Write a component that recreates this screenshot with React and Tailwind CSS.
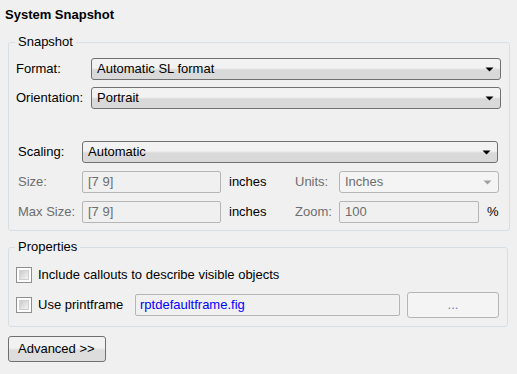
const Arrow = ({ disabled }) => (
  <svg width="9" height="5" viewBox="0 0 9 5" className="shrink-0">
    <path d="M0.5 0.5h8L4.5 4.5z" fill={disabled ? '#a0a0a0' : '#000'} />
  </svg>
);

const Dropdown = ({ value, className = '' }) => (
  <div
    className={`flex h-[22px] items-center justify-between rounded-[3px] border border-[#707070] bg-gradient-to-b from-[#f2f2f2] from-45% to-[#d9d9d9] to-55% pl-[5px] pr-[6px] ${className}`}
  >
    <span>{value}</span>
    <Arrow />
  </div>
);

const DisabledDropdown = ({ value, className = '' }) => (
  <div
    className={`flex h-[22px] items-center justify-between rounded-[3px] border border-[#b5b5b5] bg-[#f4f4f4] pl-[5px] pr-[6px] text-[#6d6d6d] ${className}`}
  >
    <span>{value}</span>
    <Arrow disabled />
  </div>
);

const Field = ({ value, className = '' }) => (
  <div
    className={`flex h-[22px] items-center rounded-[2px] border border-[#b5b5b5] bg-[#f0f0f0] pl-[5px] text-[#6d6d6d] ${className}`}
  >
    {value}
  </div>
);

const Checkbox = () => (
  <div className="h-[16px] w-[16px] shrink-0 border border-[#8e8f8f] bg-white p-[2px]">
    <div className="h-full w-full border border-[#d0d0d0] bg-gradient-to-br from-[#cbcbcb] to-[#f4f4f4]" />
  </div>
);

export default function App() {
  return (
    <div className="h-[374px] w-[517px] bg-[#f0f0f0] text-[13px] leading-[16px] text-black [font-family:'Liberation_Sans',Arial,sans-serif]">
      <div className="pl-[5px] pt-[7px] font-bold">System Snapshot</div>

      {/* Snapshot group */}
      <fieldset className="mx-[8px] mt-[11px] w-[500px] rounded-[3px] border border-[#d5dfe5]">
        <legend className="ml-[6px] px-[3px]">Snapshot</legend>

        <div className="grid grid-cols-[75px_1fr] items-center gap-y-[7px] pl-[7px] pr-[8px] pt-[8px]">
          <span>Format:</span>
          <Dropdown value="Automatic SL format" />
          <span>Orientation:</span>
          <Dropdown value="Portrait" />
        </div>

        <div className="flex flex-col gap-[8px] pb-[7px] pl-[9px] pr-[10px] pt-[32px]">
          <div className="flex items-center pr-[1px]">
            <span className="w-[64px]">Scaling:</span>
            <Dropdown value="Automatic" className="flex-1" />
          </div>

          <div className="flex items-center">
            <span className="w-[64px] text-[#6d6d6d]">Size:</span>
            <Field value="[7 9]" className="w-[139px]" />
            <span className="ml-[8px] w-[66px]">inches</span>
            <span className="w-[44px] text-[#6d6d6d]">Units:</span>
            <DisabledDropdown value="Inches" className="flex-1" />
          </div>

          <div className="flex items-center">
            <span className="w-[64px] text-[#6d6d6d]">Max Size:</span>
            <Field value="[7 9]" className="w-[139px]" />
            <span className="ml-[8px] w-[66px]">inches</span>
            <span className="w-[44px] text-[#6d6d6d]">Zoom:</span>
            <Field value="100" className="w-[140px]" />
            <span className="ml-[8px]">%</span>
          </div>
        </div>
      </fieldset>

      {/* Properties group */}
      <fieldset className="mx-[8px] mt-[8px] w-[500px] rounded-[3px] border border-[#d5dfe5]">
        <legend className="ml-[6px] px-[3px]">Properties</legend>

        <div className="flex flex-col gap-[6px] pb-[8px] pl-[7px] pr-[8px] pt-[9px]">
          <div className="flex h-[22px] items-center gap-[6px]">
            <Checkbox />
            <span>Include callouts to describe visible objects</span>
          </div>
          <div className="flex h-[26px] items-center">
            <Checkbox />
            <span className="ml-[6px] w-[97px]">Use printframe</span>
            <div className="flex h-[22px] w-[265px] items-center rounded-[2px] border border-[#b5b5b5] bg-[#f0f0f0] pl-[4px] text-[#0000ff]">
              rptdefaultframe.fig
            </div>
            <button className="ml-[7px] h-[26px] flex-1 rounded-[3px] border border-[#b5b5b5] bg-[#f4f4f4] text-[#5f83b5]">
              ...
            </button>
          </div>
        </div>
      </fieldset>

      <button className="ml-[8px] mt-[9px] h-[26px] w-[98px] rounded-[3px] border border-[#707070] bg-gradient-to-b from-[#f2f2f2] from-45% to-[#dddddd] to-55% pl-[9px] text-left">
        Advanced &gt;&gt;
      </button>
    </div>
  );
}
